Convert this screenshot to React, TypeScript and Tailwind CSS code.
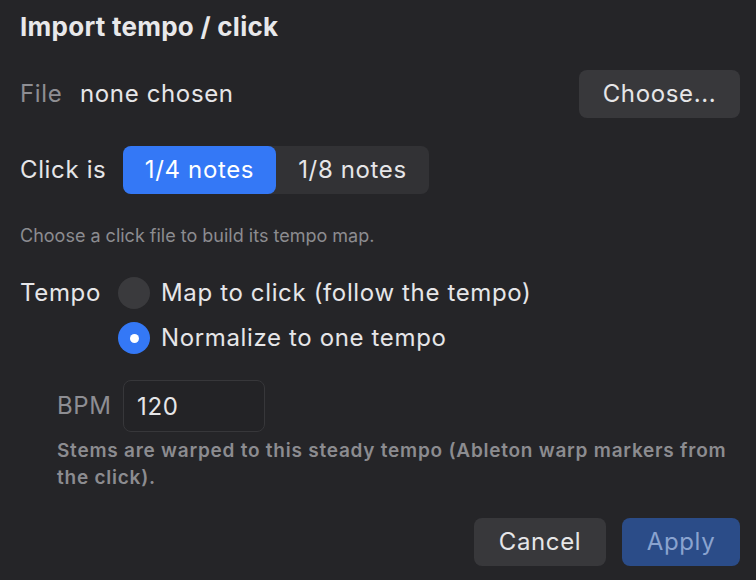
import React, { useState } from "react";

const App: React.FC = () => {
  const [click, setClick] = useState<"4" | "8">("4");
  const [mode, setMode] = useState<"map" | "normalize">("normalize");

  return (
    <div className="w-[756px] h-[580px] bg-[#252528] text-[#e6e6e8] pl-5 pr-4 pt-[11px] font-['Inter','Noto_Sans',sans-serif] tracking-[0.04em] overflow-hidden">
      {/* Title */}
      <h1 className="h-8 leading-8 text-[26px] font-bold tracking-[0.01em] text-[#e8e8ea]">Import tempo / click</h1>

      {/* File row */}
      <div className="mt-[27px] h-12 flex items-center">
        <span className="w-[60px] text-[24px] text-[#8e8e93]">File</span>
        <span className="text-[24px]">none chosen</span>
        <button className="ml-auto w-[161px] h-12 rounded-lg bg-[#38383b] text-[24px] text-[#e6e6e8]">
          Choose...
        </button>
      </div>

      {/* Click is row */}
      <div className="mt-7 h-12 flex items-center">
        <span className="w-[103px] text-[24px]">Click is</span>
        <div className="flex h-12 rounded-lg bg-[#323235]">
          <button
            onClick={() => setClick("4")}
            className={
              click === "4"
                ? "w-[153px] h-12 rounded-lg bg-[#3478f6] text-[24px] text-white"
                : "w-[153px] h-12 rounded-lg text-[24px] text-[#e6e6e8]"
            }
          >
            1/4 notes
          </button>
          <button
            onClick={() => setClick("8")}
            className={
              click === "8"
                ? "w-[153px] h-12 rounded-lg bg-[#3478f6] text-[24px] text-white"
                : "w-[153px] h-12 rounded-lg text-[24px] text-[#e6e6e8]"
            }
          >
            1/8 notes
          </button>
        </div>
      </div>

      {/* Helper */}
      <p className="mt-[30px] h-6 leading-6 text-[18px] tracking-normal text-[#8c8c90]">
        Choose a click file to build its tempo map.
      </p>

      {/* Tempo radios */}
      <div className="mt-[29px] h-8 flex items-center">
        <span className="w-[98px] text-[24px]">Tempo</span>
        <button onClick={() => setMode("map")} className="flex items-center gap-[11px]">
          <Radio on={mode === "map"} />
          <span className="text-[24px]">Map to click (follow the tempo)</span>
        </button>
      </div>
      <div className="mt-[13px] h-8 flex items-center pl-[98px]">
        <button onClick={() => setMode("normalize")} className="flex items-center gap-[11px]">
          <Radio on={mode === "normalize"} />
          <span className="text-[24px]">Normalize to one tempo</span>
        </button>
      </div>

      {/* BPM */}
      <div className="mt-[26px] h-[52px] flex items-center pl-[37px]">
        <span className="w-[66px] text-[24px] text-[#8e8e93]">BPM</span>
        <input
          defaultValue="120"
          className="w-[142px] h-[52px] rounded-lg border border-[#37373a] bg-[#232326] pl-[13px] text-[24px] text-[#e6e6e8] outline-none"
        />
      </div>

      <p className="mt-[5px] pl-[37px] leading-[27px] text-[19px] font-semibold tracking-[0.04em] text-[#8c8c90]">
        Stems are warped to this steady tempo (Ableton warp markers from the click).
      </p>

      {/* Footer */}
      <div className="mt-[27px] flex justify-end gap-4">
        <button className="w-[132px] h-12 rounded-lg bg-[#38383b] text-[24px] text-[#e6e6e8]">Cancel</button>
        <button className="w-[118px] h-12 rounded-lg bg-[#2b4c88] text-[24px] text-[#8aa3cf]">Apply</button>
      </div>
    </div>
  );
};

const Radio: React.FC<{ on: boolean }> = ({ on }) =>
  on ? (
    <span className="w-8 h-8 rounded-full bg-[#3478f6] flex items-center justify-center">
      <span className="w-[9px] h-[9px] rounded-full bg-white" />
    </span>
  ) : (
    <span className="w-8 h-8 rounded-full bg-[#3a3a3d]" />
  );

export default App;
